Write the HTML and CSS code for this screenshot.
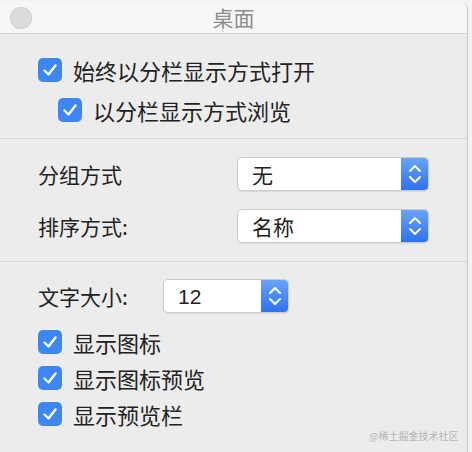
FILE: index.html
```html
<!DOCTYPE html>
<html>
<head>
<meta charset="utf-8">
<link rel="stylesheet" href="styles.css">
</head>
<body>
<div class="window">
  <div class="titlebar">
    <span class="dot"></span>
    <span class="title">桌面</span>
  </div>
  <div class="section s1">
    <div class="row">
      <span class="cb"><svg viewBox="0 0 24 24" width="24" height="24"><path d="M6.5 12.5 L10.5 16.5 L17.5 7.5" fill="none" stroke="#fff" stroke-width="2.4" stroke-linecap="round" stroke-linejoin="round"/></svg></span>
      <span class="lbl">始终以分栏显示方式打开</span>
    </div>
    <div class="row indent">
      <span class="cb"><svg viewBox="0 0 24 24" width="24" height="24"><path d="M6.5 12.5 L10.5 16.5 L17.5 7.5" fill="none" stroke="#fff" stroke-width="2.4" stroke-linecap="round" stroke-linejoin="round"/></svg></span>
      <span class="lbl">以分栏显示方式浏览</span>
    </div>
  </div>
  <div class="section s2">
    <div class="prow">
      <span class="plabel">分组方式</span>
      <div class="popup wide">
        <span class="val">无</span>
        <span class="arrows"><svg viewBox="0 0 28 34" width="28" height="34"><path d="M9 14 L14 9 L19 14 M9 20 L14 25 L19 20" fill="none" stroke="#fff" stroke-width="2" stroke-linecap="round" stroke-linejoin="round"/></svg></span>
      </div>
    </div>
    <div class="prow">
      <span class="plabel">排序方式:</span>
      <div class="popup wide">
        <span class="val">名称</span>
        <span class="arrows"><svg viewBox="0 0 28 34" width="28" height="34"><path d="M9 14 L14 9 L19 14 M9 20 L14 25 L19 20" fill="none" stroke="#fff" stroke-width="2" stroke-linecap="round" stroke-linejoin="round"/></svg></span>
      </div>
    </div>
  </div>
  <div class="section s3">
    <div class="frow">
      <span class="plabel">文字大小:</span>
      <div class="popup narrow">
        <span class="val num">12</span>
        <span class="arrows"><svg viewBox="0 0 28 34" width="28" height="34"><path d="M9 14 L14 9 L19 14 M9 20 L14 25 L19 20" fill="none" stroke="#fff" stroke-width="2" stroke-linecap="round" stroke-linejoin="round"/></svg></span>
      </div>
    </div>
    <div class="crow">
      <span class="cb"><svg viewBox="0 0 24 24" width="24" height="24"><path d="M6.5 12.5 L10.5 16.5 L17.5 7.5" fill="none" stroke="#fff" stroke-width="2.4" stroke-linecap="round" stroke-linejoin="round"/></svg></span>
      <span class="lbl">显示图标</span>
    </div>
    <div class="crow">
      <span class="cb"><svg viewBox="0 0 24 24" width="24" height="24"><path d="M6.5 12.5 L10.5 16.5 L17.5 7.5" fill="none" stroke="#fff" stroke-width="2.4" stroke-linecap="round" stroke-linejoin="round"/></svg></span>
      <span class="lbl">显示图标预览</span>
    </div>
    <div class="crow">
      <span class="cb"><svg viewBox="0 0 24 24" width="24" height="24"><path d="M6.5 12.5 L10.5 16.5 L17.5 7.5" fill="none" stroke="#fff" stroke-width="2.4" stroke-linecap="round" stroke-linejoin="round"/></svg></span>
      <span class="lbl">显示预览栏</span>
    </div>
  </div>
  <div class="watermark">@稀土掘金技术社区</div>
</div>
</body>
</html>
```
FILE: styles.css
```css
html, body {
  margin: 0;
  padding: 0;
}
body {
  width: 472px;
  height: 452px;
  overflow: hidden;
  background: #f3f3f3;
  font-family: "Noto Sans CJK SC", "Noto Sans", sans-serif;
  color: #222;
}
.window {
  position: relative;
  margin-top: 2px;
  width: 468px;
  height: 450px;
  background: #ececec;
  border-right: 1px solid #c9c9c9;
  border-top-right-radius: 7px;
  box-sizing: border-box;
  overflow: hidden;
}
.titlebar {
  position: relative;
  height: 31px;
  background: #f6f6f6;
  border-bottom: 1px solid #d4d4d4;
  display: flex;
  align-items: center;
  justify-content: center;
}
.dot {
  position: absolute;
  left: 10px;
  top: 5px;
  width: 22px;
  height: 22px;
  border-radius: 50%;
  background: #dcdcdc;
  box-shadow: inset 0 0 0 1px #d2d2d2;
}
.title {
  font-size: 21px;
  color: #8c8c8c;
  line-height: 31px;
}
.section {
  border-bottom: 1px solid #d6d6d6;
}
.s1 {
  padding: 16px 0 8px 38px;
}
.row {
  height: 40px;
  display: flex;
  align-items: center;
}
.row.indent {
  padding-left: 20px;
}
.cb {
  width: 24px;
  height: 24px;
  border-radius: 5px;
  background: #3d86f5;
  display: flex;
  flex-shrink: 0;
}
.lbl {
  font-size: 22px;
  margin-left: 11px;
  line-height: 1;
}
.s2 {
  padding: 9px 0 9px 38px;
}
.prow {
  height: 52px;
  display: flex;
  align-items: center;
}
.plabel {
  font-size: 21px;
  width: 199px;
  line-height: 1;
}
.popup {
  height: 34px;
  box-sizing: border-box;
  background: #fff;
  border: 1px solid #cbcbcb;
  border-radius: 5px;
  display: flex;
  align-items: center;
  box-shadow: 0 1px 1px rgba(0,0,0,0.08);
  overflow: hidden;
}
.popup.wide {
  width: 192px;
}
.popup.narrow {
  width: 126px;
}
.val {
  flex: 1;
  padding-left: 14px;
  font-size: 21px;
  line-height: 1;
}
.val.num {
  font-family: "Liberation Sans", "Noto Sans", sans-serif;
  font-size: 21px;
}
.arrows {
  width: 28px;
  height: 34px;
  margin: -1px -1px -1px 0;
  background: linear-gradient(#6aa5fa, #2d70ef);
  display: flex;
}
.s3 {
  border-bottom: none;
  padding: 16px 0 0 38px;
}
.frow {
  height: 36px;
  display: flex;
  align-items: center;
  margin-bottom: 10px;
}
.frow .plabel {
  width: 125px;
}
.crow {
  height: 36px;
  display: flex;
  align-items: center;
}
.watermark {
  position: absolute;
  left: 369px;
  top: 426px;
  font-size: 10px;
  white-space: nowrap;
  color: #b4b4b4;
}
```
